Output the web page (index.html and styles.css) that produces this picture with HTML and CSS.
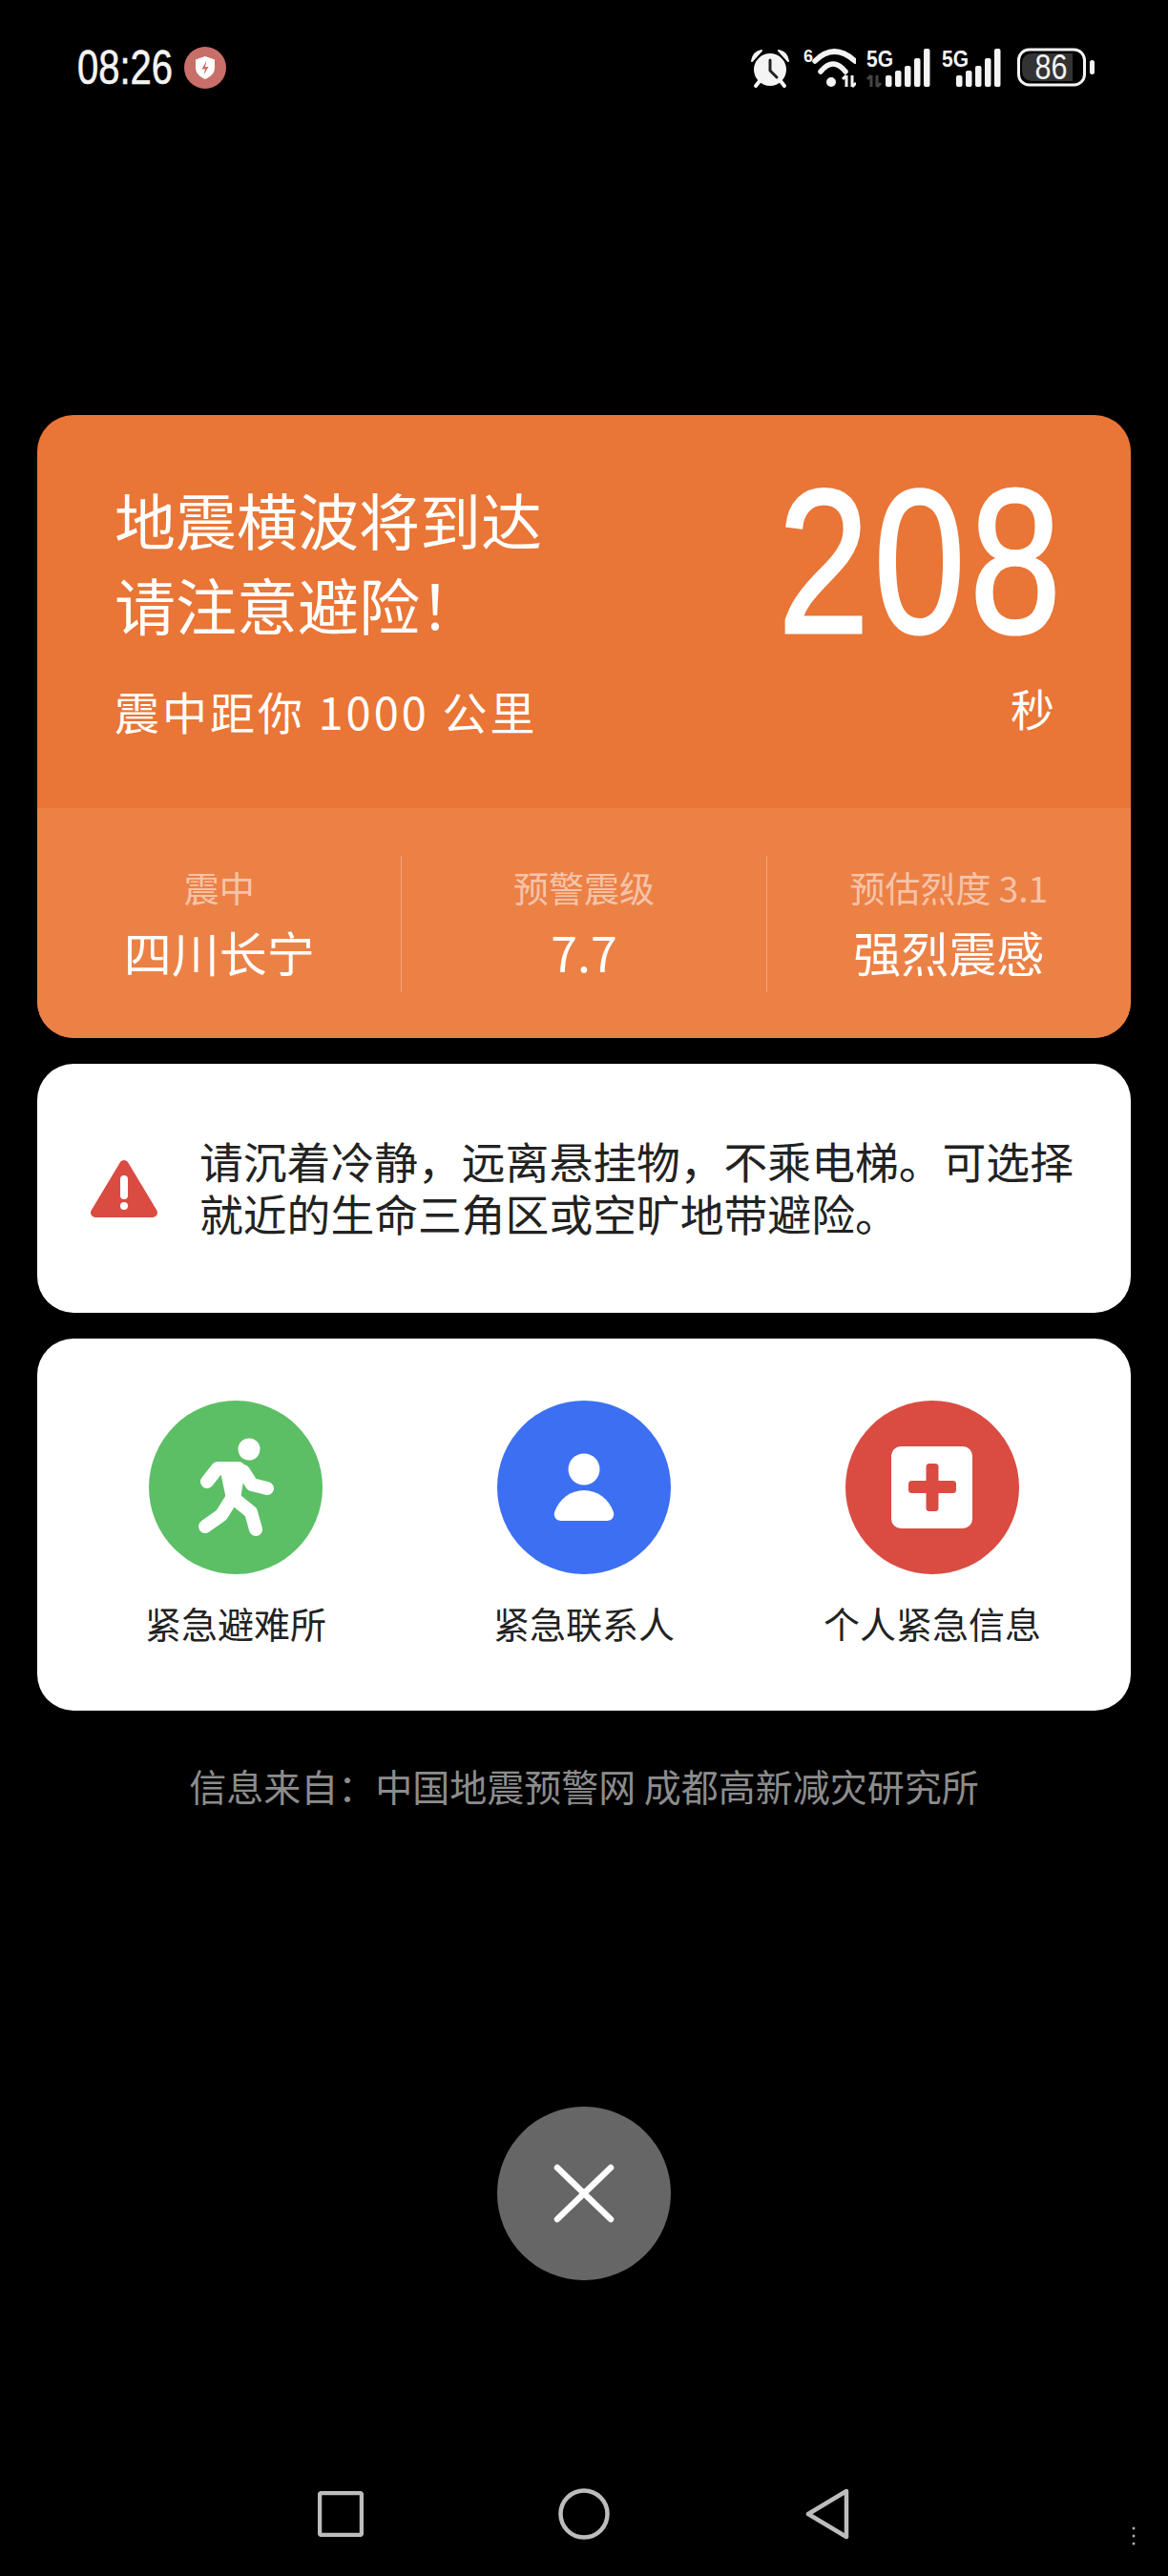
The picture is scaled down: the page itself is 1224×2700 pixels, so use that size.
FILE: index.html
```html
<!DOCTYPE html>
<html lang="zh-CN">
<head>
    <meta charset="UTF-8">
    <title>地震预警</title>
    <link rel="stylesheet" href="styles.css">
</head>
<body>
    <div class="page">
        <div class="status-bar">
            <div class="status-left">
                <span class="clock">08:26</span>
                <svg class="shield" viewBox="0 0 44 44">
                    <circle cx="22" cy="22" r="22" fill="#c96f69"/>
                    <path d="M22 10l10 3.500v8c0 6-4 10-10 12.500c-6-2.500-10-6.500-10-12.500v-8z" fill="#fff"/>
                    <path d="M23.500 14.500l-5 9h3.500l-1.500 6 5-8.500h-3.500z" fill="#c96f69"/>
                </svg>
            </div>
            <div class="status-right">
                <svg class="st-alarm" viewBox="0 -3 44 48">
                    <circle cx="20" cy="23" r="17" fill="#f4f4f4"/>
                    <path d="M20 13v11l7 7" fill="none" stroke="#222" stroke-width="3" stroke-linecap="round" stroke-linejoin="round"/>
                    <path d="M1 14C2 7 6 4 11 3z M39 14C38 7 34 4 29 3z" fill="#f4f4f4" stroke="#f4f4f4" stroke-width="2" stroke-linejoin="round"/>
                    <path d="M9 35l-4 5M31 35l4 5" stroke="#f4f4f4" stroke-width="4" stroke-linecap="round"/>
                </svg>
                <svg class="st-wifi" viewBox="0 -3 55 48">
                    <text class="st-text" x="0" y="15" font-size="19" textLength="10" lengthAdjust="spacingAndGlyphs">6</text>
                    <path d="M12 14Q32 -6 54 14" fill="none" stroke="#f4f4f4" stroke-width="5.500" stroke-linecap="round"/>
                    <path d="M18 25Q31 9 44 25" fill="none" stroke="#f4f4f4" stroke-width="5.500" stroke-linecap="round"/>
                    <circle cx="29" cy="36" r="5" fill="#f4f4f4"/>
                    <path d="M45 29v12M41 33l4-4M51 29v12M51 41l4-4" fill="none" stroke="#f4f4f4" stroke-width="3"/>
                </svg>
                <svg class="st-signal" viewBox="0 -3 68 48">
                    <text class="st-text" x="0" y="20" font-size="24" textLength="28" lengthAdjust="spacingAndGlyphs">5G</text>
                    <path d="M5 29v12M1 33l4-4M11 29v12M11 41l4-4" fill="none" stroke="#444" stroke-width="3"/>
                    <g fill="#f4f4f4">
                        <rect x="20" y="29" width="6.500" height="12" rx="2"/>
                        <rect x="30" y="24" width="6.500" height="17" rx="2"/>
                        <rect x="40" y="19" width="6.500" height="22" rx="2"/>
                        <rect x="50" y="11" width="6.500" height="30" rx="2"/>
                        <rect x="60" y="1" width="6.500" height="40" rx="2"/>
                    </g>
                </svg>
                <svg class="st-signal" viewBox="0 -3 68 48">
                    <text class="st-text" x="0" y="20" font-size="24" textLength="28" lengthAdjust="spacingAndGlyphs">5G</text>
                    <g fill="#f4f4f4">
                        <rect x="15" y="29" width="6.500" height="12" rx="2"/>
                        <rect x="25" y="24" width="6.500" height="17" rx="2"/>
                        <rect x="35" y="19" width="6.500" height="22" rx="2"/>
                        <rect x="45" y="11" width="6.500" height="30" rx="2"/>
                        <rect x="55" y="1" width="6.500" height="40" rx="2"/>
                    </g>
                </svg>
                <svg class="st-battery" viewBox="0 -3 82 48">
                    <rect x="1.500" y="2" width="69" height="37" rx="11" fill="none" stroke="#f4f4f4" stroke-width="3"/>
                    <path d="M15 6h43v29H15a10 10 0 0 1-10-10v-9a10 10 0 0 1 10-10z" fill="#333"/>
                    <text class="st-text st-level" x="18.500" y="33" font-size="37" textLength="34" lengthAdjust="spacingAndGlyphs">86</text>
                    <rect x="76" y="13" width="5" height="15" rx="2.500" fill="#f4f4f4"/>
                </svg>
            </div>
        </div>

        <div class="card alert-card">
            <div class="alert-top">
                <div class="alert-left">
                    <div class="alert-title">地震横波将到达<br>请注意避险！</div>
                    <div class="alert-distance">震中距你 1000 公里</div>
                </div>
                <div class="alert-right">
                    <div class="countdown">208</div>
                    <div class="alert-unit">秒</div>
                </div>
            </div>
            <div class="alert-bottom">
                <div class="stat">
                    <div class="stat-label">震中</div>
                    <div class="stat-value">四川长宁</div>
                </div>
                <div class="stat">
                    <div class="stat-label">预警震级</div>
                    <div class="stat-value">7.7</div>
                </div>
                <div class="stat">
                    <div class="stat-label">预估烈度 3.1</div>
                    <div class="stat-value">强烈震感</div>
                </div>
            </div>
        </div>

        <div class="card tip-card">
            <svg class="tip-icon" viewBox="0 0 70 62">
                <path d="M35 6L5 56H65z" fill="#da4c42" stroke="#da4c42" stroke-width="10" stroke-linejoin="round"/>
                <rect x="31" y="17" width="8" height="25" rx="4" fill="#fff"/>
                <circle cx="35" cy="49" r="4" fill="#fff"/>
            </svg>
            <div class="tip-text">请沉着冷静，远离悬挂物，不乘电梯。可选择就近的生命三角区或空旷地带避险。</div>
        </div>

        <div class="card action-card">
            <div class="action">
                <svg class="action-icon" viewBox="0 0 182 182">
                    <circle cx="91" cy="91" r="91" fill="#5cbf66"/>
                    <circle cx="105" cy="51" r="11.500" fill="#fff"/>
                    <g fill="none" stroke="#fff" stroke-width="14" stroke-linecap="round" stroke-linejoin="round">
                        <path d="M61 85L72 71H94L89 103"/>
                        <path d="M99 74L108 88L124 92"/>
                        <path d="M86 104L76 120L59 132"/>
                        <path d="M91 104L107 117L112 135"/>
                    </g>
                    <path d="M74 70H100L95 108H82z" fill="#fff"/>
                </svg>
                <div class="action-label">紧急避难所</div>
            </div>
            <div class="action">
                <svg class="action-icon" viewBox="0 0 182 182">
                    <circle cx="91" cy="91" r="91" fill="#3d6ff2"/>
                    <circle cx="91" cy="72" r="16.500" fill="#fff"/>
                    <path d="M66 126h50a7 7 0 0 0 6-9C117 103 105 94 91 94S65 103 60 117a7 7 0 0 0 6 9z" fill="#fff"/>
                </svg>
                <div class="action-label">紧急联系人</div>
            </div>
            <div class="action">
                <svg class="action-icon" viewBox="0 0 182 182">
                    <circle cx="91" cy="91" r="91" fill="#da4c42"/>
                    <rect x="48" y="48" width="85" height="86" rx="10" fill="#fff"/>
                    <rect x="66" y="84" width="50" height="13" rx="3.500" fill="#da4c42"/>
                    <rect x="84.500" y="66" width="13" height="50" rx="3.500" fill="#da4c42"/>
                </svg>
                <div class="action-label">个人紧急信息</div>
            </div>
        </div>

        <div class="source">信息来自：中国地震预警网 成都高新减灾研究所</div>

        <div class="close-btn">
            <svg viewBox="0 0 64 62" width="64" height="62">
                <path d="M4 4L60 58M60 4L4 58" fill="none" stroke="#fff" stroke-width="6.500" stroke-linecap="round"/>
            </svg>
        </div>

        <div class="nav-bar">
            <div class="nav-item">
                <svg viewBox="0 0 48 48" width="48" height="48"><rect x="2" y="2" width="44" height="44" rx="2" fill="none" stroke="#bdbdbd" stroke-width="4.500"/></svg>
            </div>
            <div class="nav-item">
                <svg viewBox="0 0 54 54" width="54" height="54"><circle cx="27" cy="27" r="24.500" fill="none" stroke="#bdbdbd" stroke-width="4.500"/></svg>
            </div>
            <div class="nav-item">
                <svg viewBox="0 0 46 54" width="46" height="54"><path d="M43 3L3 27L43 51z" fill="none" stroke="#bdbdbd" stroke-width="4.500" stroke-linejoin="round"/></svg>
            </div>
            <svg class="watermark" viewBox="0 0 12 22" width="12" height="22">
                <circle cx="6" cy="2" r="1.500" fill="#aaa"/>
                <circle cx="6" cy="10" r="1.500" fill="#aaa"/>
                <circle cx="6" cy="18" r="1.500" fill="#aaa"/>
            </svg>
        </div>
    </div>
</body>
</html>
```

FILE: styles.css
```css
body {
    margin: 0;
    background-color: #000;
    font-family: "Noto Sans CJK SC", sans-serif;
}
.page {
    position: relative;
    width: 1224px;
    height: 2700px;
    overflow: hidden;
}

/* status bar */
.status-bar {
    display: flex;
    justify-content: space-between;
    align-items: center;
    height: 44px;
    padding: 49px 76px 0 81px;
}
.status-left {
    display: flex;
    align-items: center;
    gap: 12px;
}
/* the digits in the screenshot are condensed, no narrow font is installed */
.clock {
    width: 100px;
    color: #f4f4f4;
    font-family: "Liberation Sans", sans-serif;
    font-size: 50px;
    line-height: 50px;
    white-space: nowrap;
    transform: scaleX(0.8);
    transform-origin: left center;
    -webkit-text-stroke: 0.6px #f4f4f4;
}
.shield {
    width: 44px;
    height: 44px;
}
.status-right {
    display: flex;
    align-items: center;
    gap: 11px;
}
.status-right svg {
    height: 48px;
}
.st-alarm { width: 44px; }
.st-wifi { width: 55px; }
.st-signal { width: 68px; }
.st-battery { width: 82px; }
.st-text {
    fill: #f4f4f4;
    font-family: "Liberation Sans", sans-serif;
    font-weight: bold;
}
.st-level {
    font-weight: normal;
}

/* cards */
.card {
    margin: 0 39px;
    border-radius: 38px;
    overflow: hidden;
    background-color: #fff;
}
.alert-card {
    margin-top: 342px;
    background-color: #e97536;
    color: #fff;
}
.alert-top {
    display: flex;
    justify-content: space-between;
    height: 412px;
    padding: 0 80px 0 81px;
    box-sizing: border-box;
}
.alert-title {
    margin-top: 64px;
    font-size: 64px;
    line-height: 89px;
}
.alert-distance {
    margin-top: 38px;
    font-size: 47px;
    line-height: 60px;
    letter-spacing: 3px;
}
.alert-right {
    text-align: right;
}
.countdown {
    margin-top: 48px;
    margin-right: -12px;
    font-family: "Liberation Sans", sans-serif;
    font-size: 215px;
    line-height: 212px;
    letter-spacing: 6px;
    transform: scaleX(0.8);
    transform-origin: right center;
    -webkit-text-stroke: 3px #fff;
}
.alert-unit {
    margin-top: 16px;
    font-size: 46px;
    line-height: 60px;
}
.alert-bottom {
    display: flex;
    height: 241px;
    padding: 50px 0 48px;
    box-sizing: border-box;
    background-color: #ec8146;
}
.stat {
    flex: 1;
    display: flex;
    flex-direction: column;
    align-items: center;
    justify-content: center;
    gap: 14px;
    padding-bottom: 4px;
    border-left: 1px solid rgba(255,255,255,0.3);
}
.stat:first-child {
    border-left: none;
}
.stat-label {
    font-size: 37px;
    line-height: 46px;
    color: rgba(255,255,255,0.55);
}
.stat-value {
    font-size: 50px;
    line-height: 60px;
}

.tip-card {
    display: flex;
    align-items: center;
    gap: 44px;
    height: 261px;
    margin-top: 27px;
    padding-left: 56px;
}
.tip-icon {
    width: 70px;
    height: 62px;
    flex: none;
}
.tip-text {
    width: 920px;
    padding-bottom: 3px;
    font-size: 45.800px;
    line-height: 55px;
    color: #222;
}

.action-card {
    display: grid;
    grid-template-columns: repeat(3, 365px);
    justify-content: center;
    height: 390px;
    margin-top: 27px;
    padding-top: 65px;
    box-sizing: border-box;
}
.action {
    display: flex;
    flex-direction: column;
    align-items: center;
    gap: 27px;
}
.action-icon {
    width: 182px;
    height: 182px;
}
.action-label {
    font-size: 38px;
    line-height: 48px;
    color: #222;
}

.source {
    margin-top: 53px;
    text-align: center;
    font-size: 39px;
    line-height: 50px;
    color: #8c8c8c;
}

.close-btn {
    display: flex;
    align-items: center;
    justify-content: center;
    width: 182px;
    height: 182px;
    margin: 312px auto 0;
    border-radius: 50%;
    background-color: #666;
}

.nav-bar {
    display: flex;
    justify-content: center;
    margin-top: 218px;
}
.nav-item {
    display: flex;
    justify-content: center;
    align-items: center;
    width: 255px;
    height: 54px;
}
.watermark {
    position: absolute;
    left: 1182px;
    top: 2648px;
}
```
